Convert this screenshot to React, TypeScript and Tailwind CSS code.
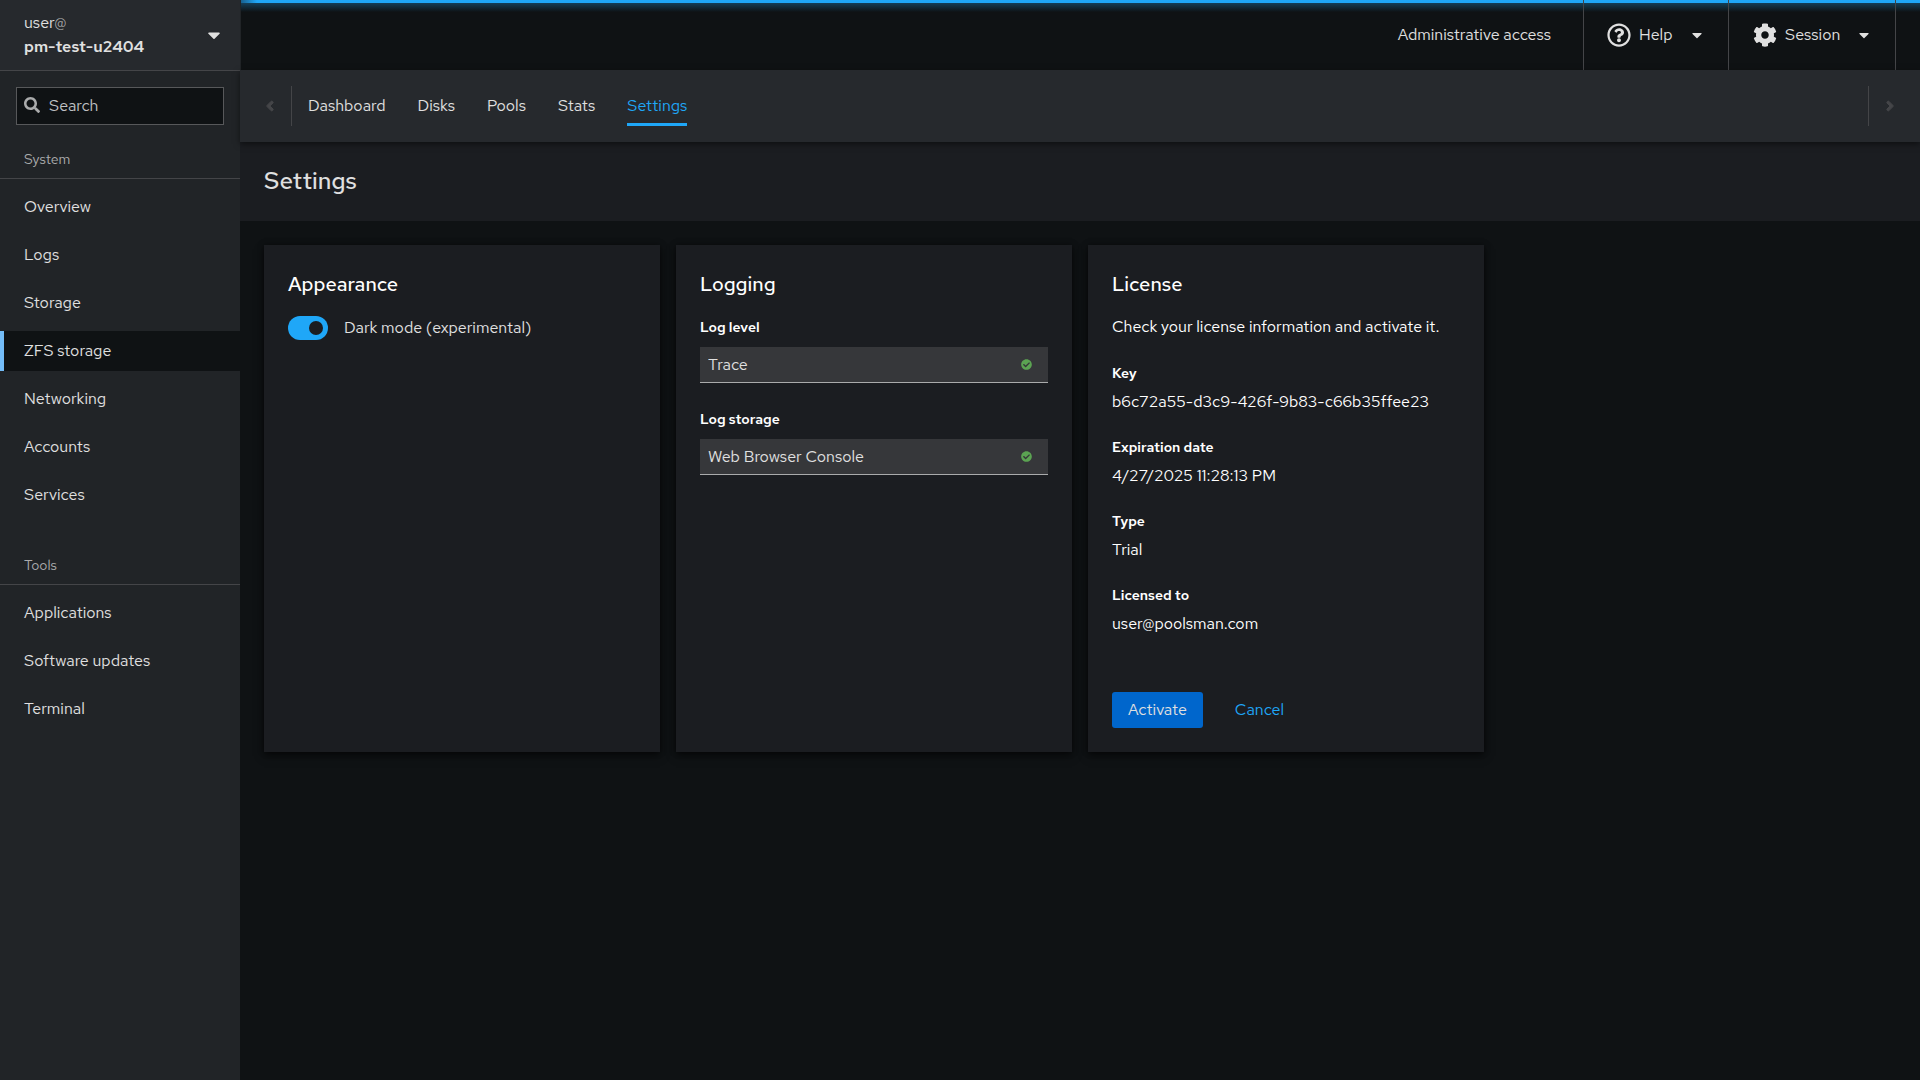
import React, { useState } from 'react';
import {
    FaAngleLeft,
    FaAngleRight,
    FaCaretDown,
    FaCheckCircle,
    FaCog,
    FaRegQuestionCircle,
    FaSearch,
} from 'react-icons/fa';

const systemItems = ['Overview', 'Logs', 'Storage', 'ZFS storage', 'Networking', 'Accounts', 'Services'];
const toolItems = ['Applications', 'Software updates', 'Terminal'];
const tabs = ['Dashboard', 'Disks', 'Pools', 'Stats', 'Settings'];

const license = [
    { label: 'Key', value: 'b6c72a55-d3c9-426f-9b83-c66b35ffee23' },
    { label: 'Expiration date', value: '4/27/2025 11:28:13 PM' },
    { label: 'Type', value: 'Trial' },
    { label: 'Licensed to', value: 'user@poolsman.com' },
];

export default function App() {
    const [dark, setDark] = useState(true);

    return (
        <div className="flex min-h-screen bg-[#0f1214] font-['Red_Hat_Text','Roboto',sans-serif] text-base leading-6 text-[#e0e0e0]">
            {/* Sidebar */}
            <aside className="w-60 shrink-0 bg-[#212427]">
                <button className="flex h-[71px] w-full items-center justify-between border-b border-[#444548] bg-[#26292d] pr-4 pl-6 text-left">
                    <span>
                        <span className="block">user<span className="text-[#aaabac]">@</span></span>
                        <span className="block font-semibold">pm-test-u2404</span>
                    </span>
                    <FaCaretDown className="size-5" />
                </button>

                <label className="mx-4 mt-4 flex h-[38px] items-center gap-[9px] border border-[#57585a] bg-[#0f1214] px-[7px]">
                    <FaSearch className="mb-0.5 size-4 shrink-0 text-[#aaabac]" />
                    <input
                        type="text"
                        aria-label="Search"
                        placeholder="Search"
                        className="w-full bg-transparent outline-none placeholder:text-[#c0c2c4]"
                    />
                </label>

                <NavSection title="System" items={systemItems} className="mt-6" />
                <NavSection title="Tools" items={toolItems} className="mt-10" />
            </aside>

            <div className="min-w-0 flex-1">
                {/* Masthead */}
                <header className="relative flex h-[70px] items-stretch justify-end border-l border-[#212427]">
                    <div className="absolute inset-x-0 top-0 h-[3px] bg-linear-to-r from-[#17618f] to-[#1fa7f8] to-[16px]" />
                    <div className="absolute inset-x-0 top-[3px] h-[9px] bg-linear-to-b from-[#1fa7f8]/30 to-transparent" />
                    <button className="relative pr-8">Administrative access</button>
                    <button className="relative flex w-[145px] items-center border-l border-[#444548] pr-[23px] pl-[23px]">
                        <FaRegQuestionCircle className="mr-2 size-6" />
                        Help
                        <FaCaretDown className="ml-auto size-4" />
                    </button>
                    <button className="relative mr-6 flex w-[168px] items-center border-x border-[#444548] pr-[23px] pl-6">
                        <FaCog className="mr-2 size-6" />
                        Session
                        <FaCaretDown className="ml-auto size-4" />
                    </button>
                </header>

                {/* Tabs */}
                <nav className="relative flex h-[72px] items-center bg-[#26292d] shadow-[0_2px_6px_rgba(0,0,0,0.5)]">
                    <button aria-label="Scroll left" className="flex h-10 w-[52px] items-center justify-center border-r border-[#444548] pl-2 text-[#444548]">
                        <FaAngleLeft className="size-4 stroke-current stroke-[32]" />
                    </button>
                    <div className="flex flex-1 gap-8 px-4">
                        {tabs.map((tab) => (
                            <a
                                key={tab}
                                href="#"
                                className={
                                    tab === 'Settings'
                                        ? 'flex h-10 items-center border-y-3 border-t-transparent border-b-[#1fa7f8] text-[#1fa7f8]'
                                        : 'flex h-10 items-center'
                                }
                            >
                                {tab}
                            </a>
                        ))}
                    </div>
                    <button aria-label="Scroll right" className="flex h-10 w-[52px] items-center border-l border-[#444548] pl-[13px] text-[#444548]">
                        <FaAngleRight className="size-4 stroke-current stroke-[32]" />
                    </button>
                </nav>

                <div className="bg-[#1b1d21] px-6 pt-[21px] pb-[22px]">
                    <h1 className="text-2xl leading-9 font-medium">Settings</h1>
                </div>

                <main className="flex flex-wrap items-stretch gap-4 p-6">
                    <Card title="Appearance">
                        <label className="flex items-center gap-4 pt-px">
                            <input
                                type="checkbox"
                                checked={dark}
                                onChange={() => setDark(!dark)}
                                className="h-6 w-10 appearance-none rounded-full bg-[#57585a] p-[5px] before:block before:size-[14px] before:rounded-full before:bg-[#1b1d21] checked:bg-[#1fa7f8] checked:pl-[21px]"
                            />
                            Dark mode (experimental)
                        </label>
                    </Card>

                    <Card title="Logging">
                        <div className="flex flex-col gap-6">
                            <SelectField id="log-level" label="Log level" options={['Trace']} />
                            <SelectField id="log-storage" label="Log storage" options={['Web Browser Console']} />
                        </div>
                    </Card>

                    <Card title="License">
                        <p className="text-white">Check your license information and activate it.</p>
                        <dl className="mt-[25px] flex flex-col gap-6 text-white">
                            {license.map((item) => (
                                <div key={item.label}>
                                    <dt className="mb-2 text-sm leading-[18px] font-semibold">{item.label}</dt>
                                    <dd>{item.value}</dd>
                                </div>
                            ))}
                        </dl>
                        <div className="mt-14 flex gap-4">
                            <button className="h-9 rounded-[3px] bg-[#0066cc] px-4">Activate</button>
                            <button className="h-9 px-4 text-[#1fa7f8]">Cancel</button>
                        </div>
                    </Card>
                </main>
            </div>
        </div>
    );
}

function NavSection({ title, items, className }: { title: string; items: string[]; className: string }) {
    return (
        <nav className={className}>
            <h2 className="border-b border-[#444548] px-6 pb-2 text-sm leading-[21px] text-[#aaabac]">{title}</h2>
            <ul className="flex flex-col gap-2 pt-2">
                {items.map((item) => (
                    <li key={item}>
                        <a
                            href="#"
                            className={
                                item === 'ZFS storage'
                                    ? 'flex h-10 items-center border-l-4 border-[#73bcf7] bg-[#0f1214] pl-5'
                                    : 'flex h-10 items-center pl-6'
                            }
                        >
                            {item}
                        </a>
                    </li>
                ))}
            </ul>
        </nav>
    );
}

function Card({ title, children }: { title: string; children: React.ReactNode }) {
    return (
        <section className="w-[396px] bg-[#1b1d21] p-6 shadow-[0_4px_8px_rgba(0,0,0,0.5),0_0_6px_rgba(0,0,0,0.4)]">
            <h2 className="mb-4 text-xl leading-[30px] font-medium text-white">{title}</h2>
            {children}
        </section>
    );
}

function SelectField({ id, label, options }: { id: string; label: string; options: string[] }) {
    return (
        <div>
            <label htmlFor={id} className="mb-2 block text-sm leading-6 font-semibold text-white">{label}</label>
            <div className="relative">
                <select id={id} className="h-9 w-full appearance-none border-b border-[#aaabac] bg-[#36373a] px-2">
                    {options.map((option) => (
                        <option key={option}>{option}</option>
                    ))}
                </select>
                <FaCheckCircle className="pointer-events-none absolute top-3 right-4 size-[11px] text-[#5ba352]" />
            </div>
        </div>
    );
}
